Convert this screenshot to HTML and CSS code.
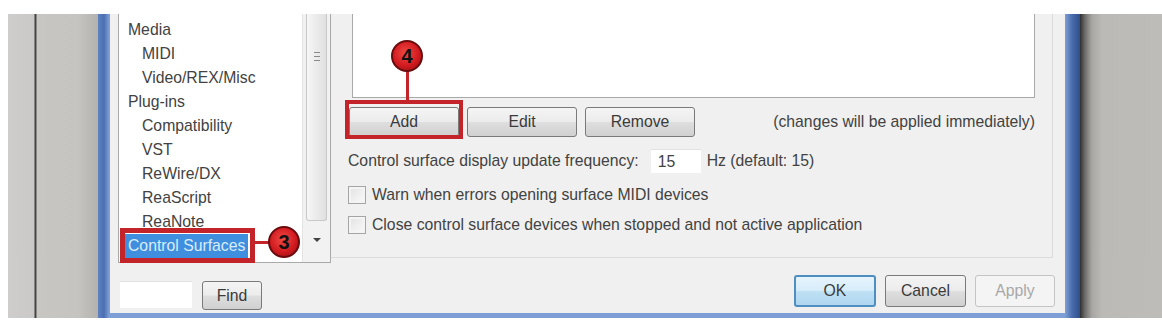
FILE: index.html
```html
<!DOCTYPE html>
<html>
<head>
<meta charset="utf-8">
<link rel="stylesheet" href="styles.css">
</head>
<body>
<div class="screen">
  <div class="desk-left"></div>
  <div class="window">
    <div class="dialog">
      <div class="main">
        <div class="tree">
          <ul class="tree-items">
            <li class="lvl0">Media</li>
            <li class="lvl1">MIDI</li>
            <li class="lvl1">Video/REX/Misc</li>
            <li class="lvl0">Plug-ins</li>
            <li class="lvl1">Compatibility</li>
            <li class="lvl1">VST</li>
            <li class="lvl1">ReWire/DX</li>
            <li class="lvl1">ReaScript</li>
            <li class="lvl1">ReaNote</li>
            <li class="lvl0 selected"><span>Control Surfaces</span></li>
          </ul>
          <div class="vscroll">
            <div class="thumb"><span class="grip"></span></div>
            <div class="arrow"></div>
          </div>
        </div>
        <div class="panel">
          <div class="devices"></div>
          <div class="btnrow">
            <button class="btn">Add</button>
            <button class="btn">Edit</button>
            <button class="btn">Remove</button>
            <span class="note">(changes will be applied immediately)</span>
          </div>
          <div class="freq">
            <span>Control surface display update frequency:</span>
            <span class="num">15</span>
            <span>Hz (default: 15)</span>
          </div>
          <div class="check"><span class="box"></span><span>Warn when errors opening surface MIDI devices</span></div>
          <div class="check"><span class="box"></span><span>Close control surface devices when stopped and not active application</span></div>
        </div>
      </div>
      <div class="footer">
        <div class="find">
          <span class="findinput"></span>
          <button class="btn findbtn">Find</button>
        </div>
        <div class="actions">
          <button class="btn ok">OK</button>
          <button class="btn">Cancel</button>
          <button class="btn apply">Apply</button>
        </div>
      </div>
    </div>
  </div>
  <div class="desk-right"></div>
</div>

<div class="annot box3"></div>
<div class="annot line3"></div>
<div class="annot badge badge3">3</div>
<div class="annot box4"></div>
<div class="annot line4"></div>
<div class="annot badge badge4">4</div>
</body>
</html>
```

FILE: styles.css
```css
html, body {
  margin: 0;
  padding: 0;
  background: #ffffff;
}
body {
  width: 1162px;
  height: 323px;
  overflow: hidden;
  font-family: "Liberation Sans", Arial, sans-serif;
  font-size: 15.75px;
  color: #424242;
}
.screen {
  display: flex;
  margin: 14px 0 0 8px;
  height: 304px;
}
.desk-left {
  width: 90px;
  background: linear-gradient(to right, #cfcdcb 0, #cbc9c7 26px, #3e3e3e 27px, #4a4a4a 28px, #c8c6c3 29px, #c6c4c1 70px, #b4b2af 90px);
}
.window {
  width: 982px;
  box-sizing: border-box;
  padding: 0 15px 5px 12px;
  background: linear-gradient(to right, #5f82c0 0, #4b6fb2 6px, #7d9fd6 11px, #7d9fd6 967px, #4a6cad 974px, #2f4f8c 982px);
  height: 304px;
}
.dialog {
  background: #f0f0f0;
  height: 299px;
  box-sizing: border-box;
  padding: 0 10px 0 8px;
  display: flex;
  flex-direction: column;
}
.main {
  display: flex;
  height: 249px;
}
.tree {
  width: 213px;
  box-sizing: border-box;
  background: #ffffff;
  border: 1px solid #a9a9a9;
  border-top: none;
  display: flex;
}
.tree-items {
  list-style: none;
  margin: 0;
  padding: 4px 0 0 0;
  flex: 1;
  overflow: hidden;
}
.tree-items li {
  height: 24px;
  line-height: 24px;
  white-space: nowrap;
}
.lvl0 { padding-left: 9px; }
.lvl1 { padding-left: 23px; }
.tree-items .selected { padding-left: 5px; }
.selected span {
  display: inline-block;
  padding: 0 3px 0 4px;
  background: #3f8fde;
  color: #d9ecff;
}
.vscroll {
  width: 27px;
  border-left: 1px solid #e4e4e4;
  background: #f2f2f2;
  display: flex;
  flex-direction: column;
  align-items: center;
}
.thumb {
  width: 21px;
  height: 207px;
  box-sizing: border-box;
  border: 1px solid #c8c8c8;
  border-top: none;
  border-radius: 0 0 3px 3px;
  background: linear-gradient(to right, #f6f6f6, #ebebeb 50%, #e0e0e0);
  position: relative;
}
.grip {
  position: absolute;
  left: 7px;
  top: 38px;
  width: 6px;
  height: 7px;
  border-top: 1px solid #8a8a8a;
  border-bottom: 1px solid #8a8a8a;
  background: linear-gradient(#8a8a8a, #8a8a8a) center / 6px 1px no-repeat;
}
.arrow {
  margin-top: 17px;
  width: 0;
  height: 0;
  border-left: 4px solid transparent;
  border-right: 4px solid transparent;
  border-top: 4px solid #444;
}
.panel {
  width: 722px;
  height: 244px;
  box-sizing: border-box;
  border-right: 1px solid #dcdcdc;
  border-bottom: 1px solid #dcdcdc;
  padding: 0 17px 0 17px;
}
.devices {
  margin-left: 4px;
  height: 83px;
  background: #ffffff;
  border: 1px solid #a9a9a9;
  border-top: none;
}
.btnrow {
  display: flex;
  align-items: center;
  gap: 8px;
  margin-top: 9px;
  height: 30px;
}
.btn {
  font-family: "Liberation Sans", Arial, sans-serif;
  font-size: 15.75px;
  color: #3a3a3a;
  height: 30px;
  border: 1px solid #7a7a7a;
  border-radius: 3px;
  background: linear-gradient(#f4f4f4 0%, #ececec 48%, #dedede 52%, #d0d0d0 100%);
  padding: 0;
}
.btnrow .btn {
  width: 110px;
}
.btnrow .btn:first-child { margin-left: 1px; }
.note {
  margin-left: auto;
}
.freq {
  display: flex;
  align-items: center;
  height: 24px;
  margin-top: 12px;
}
.num {
  width: 50px;
  height: 24px;
  box-sizing: border-box;
  margin: 0 6px 0 12px;
  background: #ffffff;
  border-top: 1px solid #e2e2e2;
  padding: 3px 0 0 7px;
}
.check {
  display: flex;
  align-items: center;
  gap: 6px;
  height: 30px;
}
.freq + .check { margin-top: 7px; }
.box {
  width: 18px;
  height: 18px;
  box-sizing: border-box;
  border: 1px solid #a5a5a5;
  background: linear-gradient(135deg, #e2e2e2, #fafafa);
  box-shadow: inset 0 0 0 2px #f4f4f4;
}
.footer {
  display: flex;
  height: 50px;
}
.find {
  display: flex;
  gap: 10px;
  margin: 18px 0 0 2px;
  align-items: flex-start;
}
.findinput {
  width: 72px;
  height: 26px;
  background: #ffffff;
  border-top: 1px solid #e0e0e0;
}
.findbtn {
  width: 60px;
  height: 29px;
}
.actions {
  display: flex;
  gap: 9px;
  margin: 12px 0 0 auto;
  align-items: flex-start;
}
.actions .btn {
  width: 81px;
  height: 32px;
}
.actions .ok {
  border: 2px solid #4f8fbf;
  background: linear-gradient(#e6f4fc 0%, #d6ecf9 48%, #bfe0f5 52%, #aed6f0 100%);
  width: 82px;
}
.actions .apply {
  width: 80px;
  border-color: #c4c4c4;
  background: #f4f4f4;
  color: #a8a8a8;
}
.desk-right {
  flex: 1;
  background: linear-gradient(to right, #2f2f2f 0, #6e6d6b 5px, #a9a7a4 12px, #bcbab7 22px, #bebcb9 100%);
}
.annot {
  position: absolute;
  box-sizing: border-box;
}
.box3 {
  left: 120px;
  top: 228px;
  width: 135px;
  height: 35px;
  border: 5px solid #c3242a;
}
.line3 {
  left: 255px;
  top: 241px;
  width: 15px;
  height: 3px;
  background: #c3242a;
}
.box4 {
  left: 345px;
  top: 100px;
  width: 118px;
  height: 39px;
  border: 4px solid #c3242a;
}
.line4 {
  left: 406px;
  top: 70px;
  width: 3px;
  height: 30px;
  background: #c3242a;
}
.badge {
  width: 32px;
  height: 32px;
  border-radius: 50%;
  border: 2px solid #6a0b0e;
  background: radial-gradient(circle at 45% 40%, #f04a44 0%, #d21b20 55%, #8e0e12 100%);
  color: #111;
  font-weight: bold;
  font-size: 20px;
  line-height: 28px;
  text-align: center;
}
.badge3 { left: 268px; top: 226px; }
.badge4 { left: 391px; top: 40px; }
```
